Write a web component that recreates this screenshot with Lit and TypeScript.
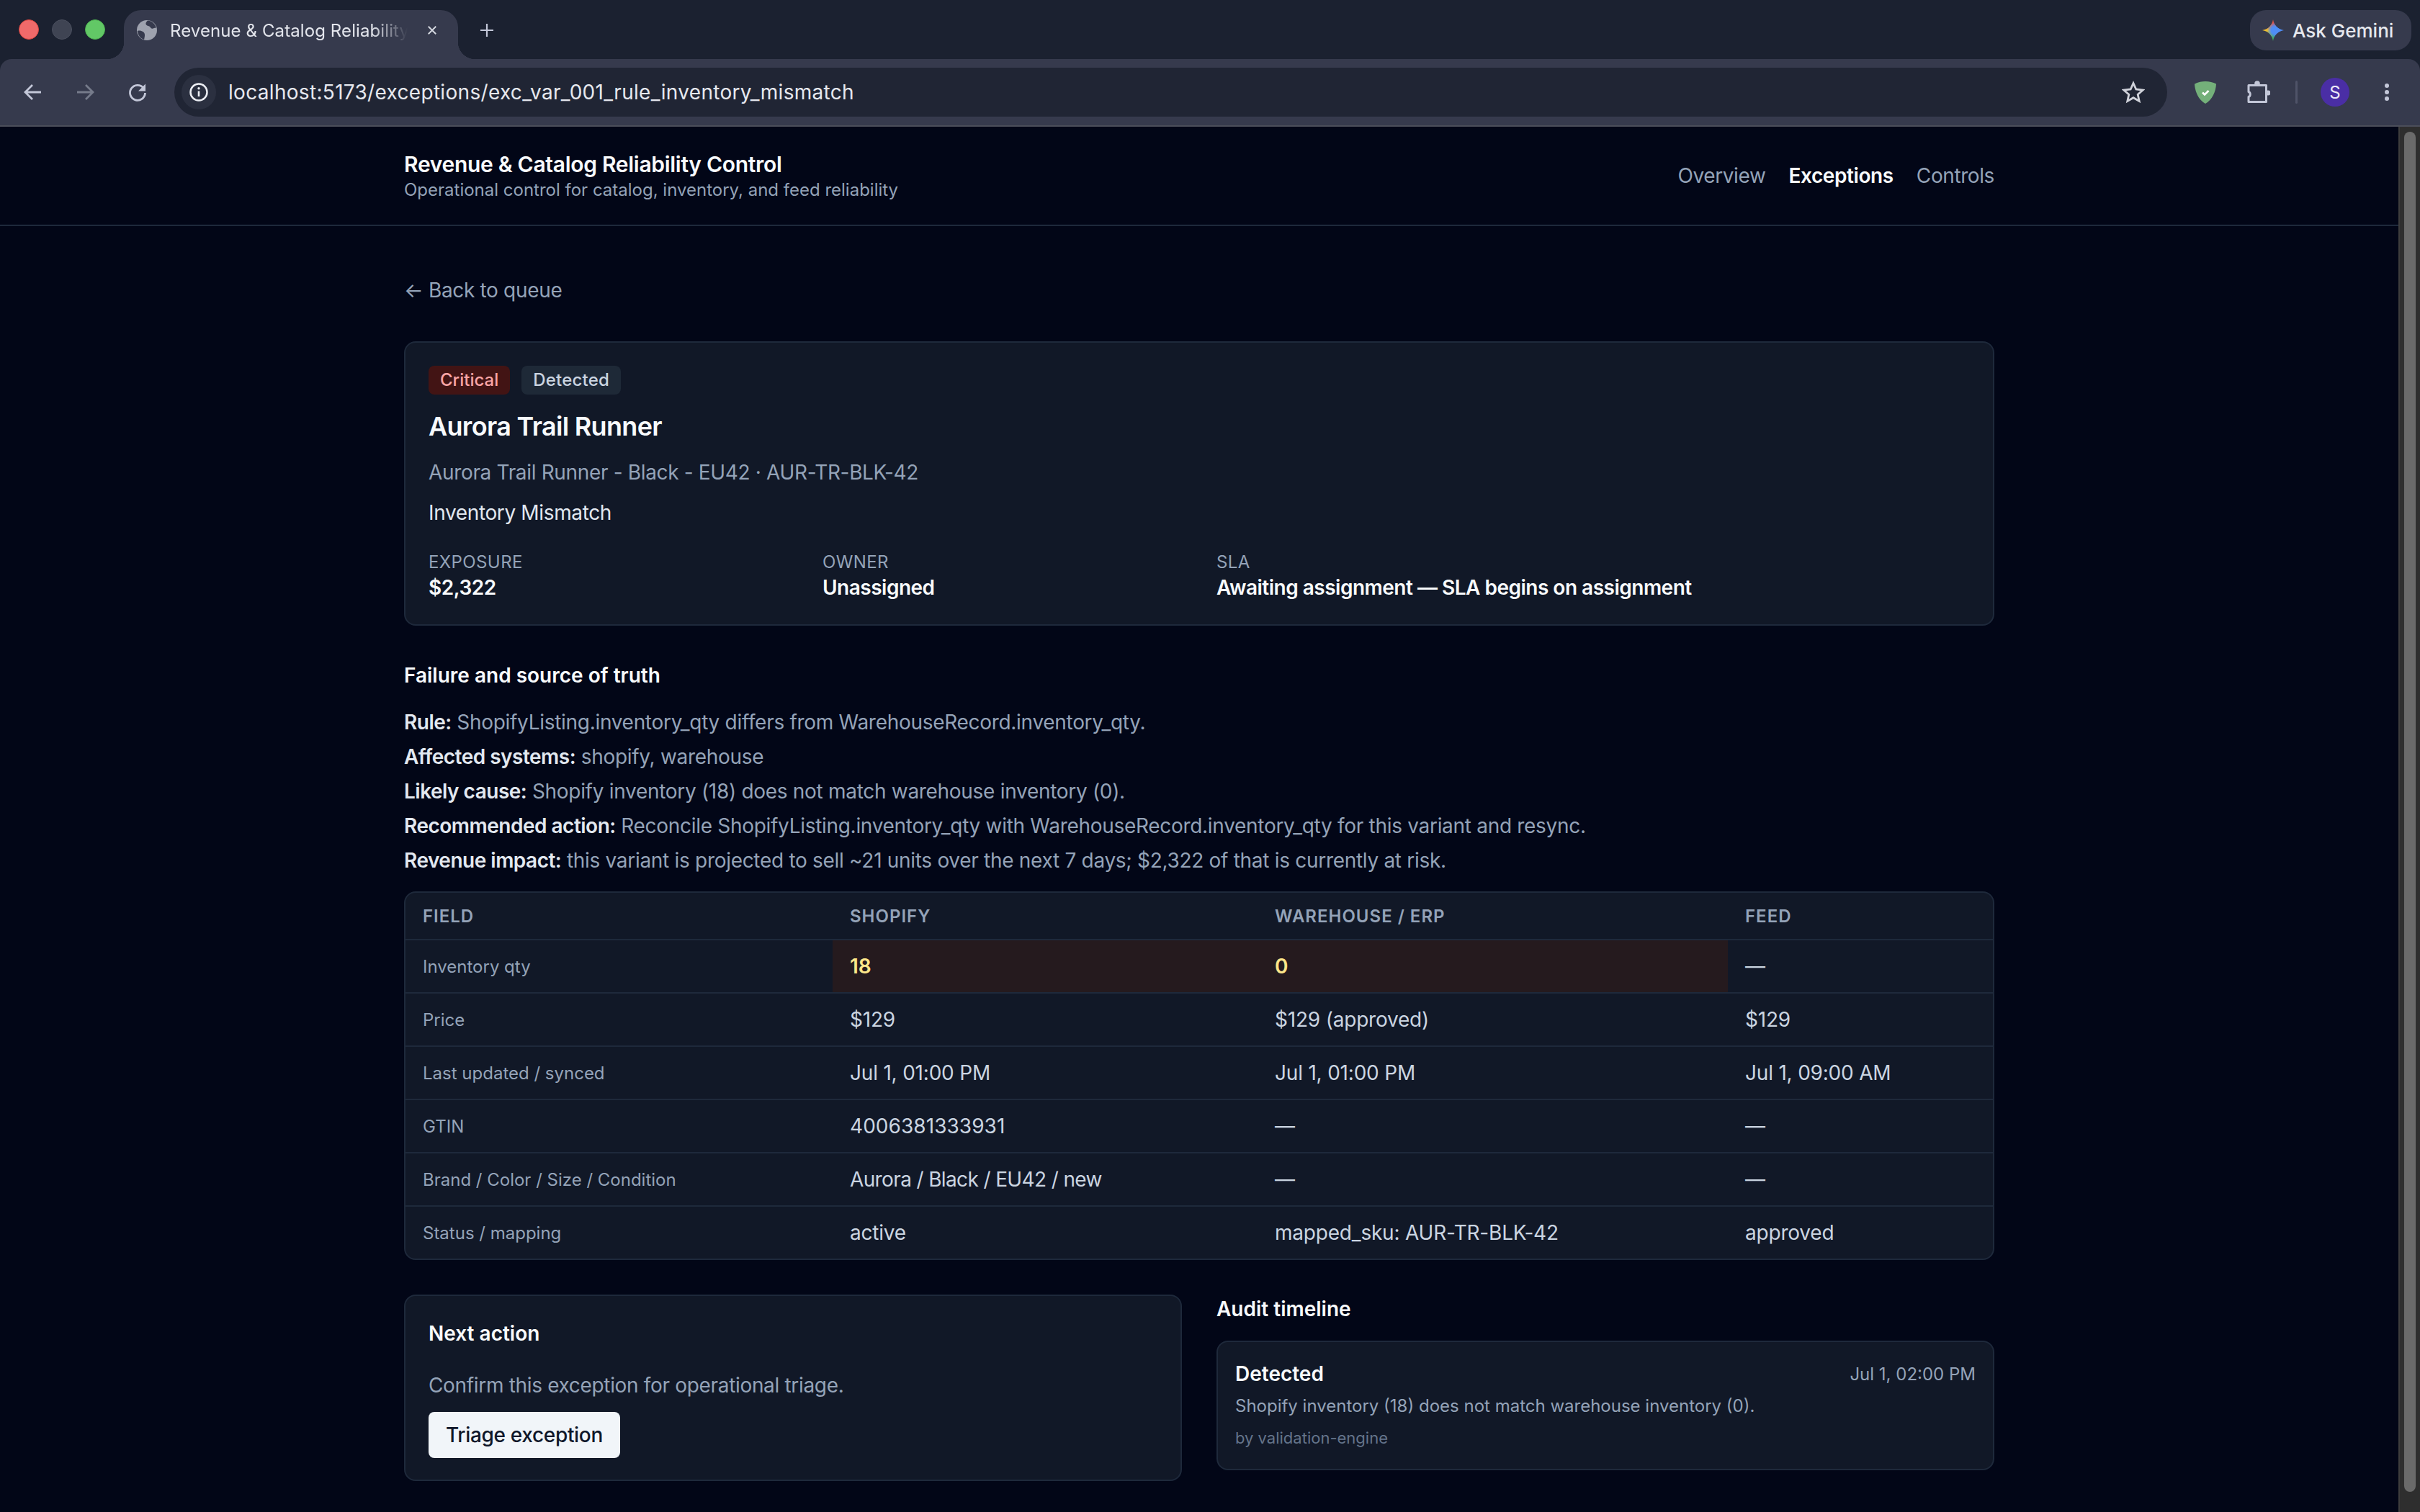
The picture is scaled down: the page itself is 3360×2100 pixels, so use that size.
import { css, html, LitElement } from "lit";
import { customElement } from "lit/decorators.js";

const ROWS = [
  { field: "Inventory qty", shopify: "18", warehouse: "0", feed: "—", mismatch: true },
  { field: "Price", shopify: "$129", warehouse: "$129 (approved)", feed: "$129" },
  { field: "Last updated / synced", shopify: "Jul 1, 01:00 PM", warehouse: "Jul 1, 01:00 PM", feed: "Jul 1, 09:00 AM" },
  { field: "GTIN", shopify: "4006381333931", warehouse: "—", feed: "—", digits: true },
  { field: "Brand / Color / Size / Condition", shopify: "Aurora / Black / EU42 / new", warehouse: "—", feed: "—", tight: true },
  { field: "Status / mapping", shopify: "active", warehouse: "mapped_sku: AUR-TR-BLK-42", feed: "approved" },
];

const FACTS = [
  ["Rule:", "ShopifyListing.inventory_qty differs from WarehouseRecord.inventory_qty."],
  ["Affected systems:", "shopify, warehouse"],
  ["Likely cause:", "Shopify inventory (18) does not match warehouse inventory (0)."],
  ["Recommended action:", "Reconcile ShopifyListing.inventory_qty with WarehouseRecord.inventory_qty for this variant and resync."],
  ["Revenue impact:", "this variant is projected to sell ~21 units over the next 7 days; $2,322 of that is currently at risk."],
];

@customElement("browser-chrome")
export class BrowserChrome extends LitElement {
  render() {
    return html`
      <div class="strip">
        <div class="lights">
          <span class="light red"></span>
          <span class="light grey"></span>
          <span class="light green"></span>
        </div>
        <div class="tab">
          <svg class="favicon" viewBox="0 0 28 28">
            <circle cx="14" cy="14" r="14" fill="#9ea2ae" />
            <path d="M15 .5c-2 2-3.500 4-2 6 1.500 2 4 1 5.500 3 .8 1.300 2 3 4 2 1.500-.7 3-1 4.500-1C25.500 5.500 21 1 15 .5z" fill="#363a4d" />
            <path d="M1 15c3-1 5.500 0 7.500 1 2 1 2.500 3 2.500 5 0 1.500-.5 4-1 6C5 25.500 1.500 21 1 15z" fill="#363a4d" />
          </svg>
          <span class="tab-title">Revenue &amp; Catalog Reliability Control</span>
          <svg class="tab-close" viewBox="0 0 16 16">
            <path d="M2 2l12 12M14 2L2 14" stroke="#d5d8e0" stroke-width="2.200" fill="none" />
          </svg>
        </div>
        <svg class="new-tab" viewBox="0 0 20 20">
          <path d="M10 1v18M1 10h18" stroke="#c3c7d8" stroke-width="2.200" fill="none" />
        </svg>
        <div class="gemini">
          <span class="spark"></span>
          <span>Ask Gemini</span>
        </div>
      </div>
      <div class="toolbar">
        <svg class="nav-icon" viewBox="0 0 28 28">
          <path d="M25 14H4M13 4L3 14l10 10" stroke="#c3c7d8" stroke-width="2.800" fill="none" />
        </svg>
        <svg class="nav-icon" viewBox="0 0 28 28">
          <path d="M3 14h21M15 4l10 10-10 10" stroke="#767b8b" stroke-width="2.800" fill="none" />
        </svg>
        <svg class="nav-icon" viewBox="0 0 28 28">
          <path d="M23 8a10.500 10.500 0 1 0 2.500 7" stroke="#c3c7d8" stroke-width="2.800" fill="none" />
          <path d="M26 2.500v10H16z" fill="#c3c7d8" />
        </svg>
        <div class="omnibox">
          <span class="site-info">
            <svg viewBox="0 0 26 26">
              <circle cx="13" cy="13" r="11.500" stroke="#eceef3" stroke-width="2.500" fill="none" />
              <path d="M13 11.500v7.500" stroke="#eceef3" stroke-width="2.600" />
              <circle cx="13" cy="7.800" r="1.700" fill="#eceef3" />
            </svg>
          </span>
          <span class="url">localhost:5173/exceptions/exc_var_001_rule_inventory_mismatch</span>
          <svg class="star" viewBox="0 0 32 32">
            <path d="M16 3.500l3.800 8.500 9.500 1-7.100 6.200 2 9.300-8.200-4.800-8.200 4.800 2-9.300L2.700 13l9.500-1z" stroke="#d0d2da" stroke-width="2.800" fill="none" />
          </svg>
        </div>
        <div class="extensions">
          <svg class="shield" viewBox="0 0 30 31">
            <path d="M15 0c5.500 0 10.500 1.200 15 3.500-.5 11-5.500 22-15 27.500C5.500 25.500.5 14.500 0 3.500 4.500 1.200 9.500 0 15 0z" fill="#74b07a" />
            <path d="M11 15.500l3 3 5.500-5.500" stroke="#ffffff" stroke-width="2.600" fill="none" />
          </svg>
          <svg class="puzzle" viewBox="0 0 32 32">
            <circle cx="14" cy="4" r="3.800" fill="#c3c7d8" />
            <circle cx="29" cy="17" r="3.500" fill="#c3c7d8" />
            <path d="M2 6.500h24.500V29.500H2V22.500c3-1 3-6 0-7z" stroke="#c3c7d8" stroke-width="3" fill="none" stroke-linejoin="round" />
          </svg>
          <span class="divider"></span>
          <span class="avatar">S</span>
          <svg class="kebab" viewBox="0 0 8 28">
            <circle cx="4" cy="5" r="3" fill="#c3c7d8" />
            <circle cx="4" cy="14" r="3" fill="#c3c7d8" />
            <circle cx="4" cy="23" r="3" fill="#c3c7d8" />
          </svg>
        </div>
      </div>
    `;
  }

  static styles = css`
    :host {
      display: block;
      font-family: Inter, "Liberation Sans", sans-serif;
      background: #1b2130;
    }

    .strip {
      height: 82px;
      display: flex;
      align-items: flex-start;
      box-sizing: border-box;
      padding-top: 14px;
    }

    .lights {
      display: flex;
      gap: 18px;
      margin-left: 26px;
      margin-top: 13px;
      width: 146px;
    }

    .light {
      width: 28px;
      height: 28px;
      box-sizing: border-box;
      border-radius: 50%;
      border: 1px solid transparent;
    }
    .red { background: #f06a6a; border-color: #d8453f; }
    .grey { background: #3f4453; border-color: #4a4f5e; }
    .green { background: #62c866; border-color: #4cae4f; }

    .tab {
      position: relative;
      width: 464px;
      height: 68px;
      box-sizing: border-box;
      padding: 0 0 12px 18px;
      background: #363a4d;
      border-radius: 24px 24px 0 0;
      display: flex;
      align-items: center;
    }

    .tab::before,
    .tab::after {
      content: "";
      position: absolute;
      bottom: 0;
      width: 24px;
      height: 24px;
    }
    .tab::before {
      left: -24px;
      background: radial-gradient(circle at 0 0, transparent 24px, #363a4d 24.500px);
    }
    .tab::after {
      right: -24px;
      background: radial-gradient(circle at 100% 0, transparent 24px, #363a4d 24.500px);
    }

    .favicon {
      width: 28px;
      height: 28px;
      flex: none;
    }

    .tab-title {
      margin-left: 18px;
      width: 330px;
      flex: none;
      overflow: hidden;
      white-space: nowrap;
      font-size: 24px;
      letter-spacing: 0.1px;
      color: #e3e5ec;
      -webkit-mask-image: linear-gradient(90deg, #000 85%, transparent 100%);
      mask-image: linear-gradient(90deg, #000 85%, transparent 100%);
    }

    .tab-close {
      width: 14px;
      height: 14px;
      margin-left: 27px;
      flex: none;
    }

    .new-tab {
      width: 20px;
      height: 20px;
      margin: 18px 0 0 30px;
    }

    .gemini {
      margin-left: auto;
      margin-right: 12px;
      width: 224px;
      height: 56px;
      box-sizing: border-box;
      padding-left: 17px;
      border-radius: 22px;
      background: #363a4d;
      display: flex;
      align-items: center;
      gap: 12px;
      font-size: 26px;
      font-weight: 500;
      color: #e6e8ee;
    }

    .spark {
      width: 30px;
      height: 30px;
      flex: none;
      background:
        radial-gradient(circle at 58% 50%, #4f8df5 22%, transparent 48%),
        conic-gradient(#e8503f 0deg, #4f8df5 60deg, #4f8df5 130deg, #3fae5f 180deg, #f5c02b 270deg, #e8503f 360deg);
      clip-path: path("M15 0C16.200 8 21.500 13.500 30 15 21.500 16.500 16.200 22 15 30 13.800 22 8.500 16.500 0 15 8.500 13.500 13.800 8 15 0z");
    }

    .toolbar {
      height: 92px;
      box-sizing: border-box;
      background: #363a4d;
      border-radius: 16px 16px 0 0;
      display: flex;
      align-items: center;
      padding-left: 32px;
      gap: 44px;
    }

    .nav-icon {
      width: 28px;
      height: 28px;
      flex: none;
    }

    .omnibox {
      width: 2767px;
      height: 68px;
      margin-left: -6px;
      flex: none;
      box-sizing: border-box;
      background: #202534;
      border-radius: 34px;
      display: flex;
      align-items: center;
      padding: 0 31px 0 10px;
    }

    .site-info {
      width: 48px;
      height: 48px;
      border-radius: 50%;
      background: #2b3040;
      display: flex;
      align-items: center;
      justify-content: center;
      flex: none;
    }
    .site-info svg {
      width: 26px;
      height: 26px;
    }

    .url {
      margin-left: 17px;
      font-size: 28px;
      letter-spacing: 0.31px;
      color: #e6e8ee;
      white-space: nowrap;
    }

    .star {
      margin-left: auto;
      width: 32px;
      height: 32px;
    }

    .extensions {
      display: flex;
      align-items: center;
      margin-left: -6px;
    }

    .shield {
      width: 30px;
      height: 31px;
    }

    .puzzle {
      width: 32px;
      height: 32px;
      margin-left: 43px;
    }

    .divider {
      width: 3px;
      height: 32px;
      border-radius: 2px;
      background: #4f5368;
      margin-left: 35px;
    }

    .avatar {
      width: 40px;
      height: 40px;
      margin-left: 32px;
      border-radius: 50%;
      background: #4a2ea5;
      color: #ece9f8;
      font-size: 24px;
      display: flex;
      align-items: center;
      justify-content: center;
    }

    .kebab {
      width: 8px;
      height: 28px;
      margin-left: 48px;
    }
  `;
}

@customElement("app-root")
export class AppRoot extends LitElement {
  render() {
    return html`
      <browser-chrome></browser-chrome>
      <div class="viewport">
        <div class="page">
          <header class="topbar">
            <div class="topbar-inner">
              <div class="brand-block">
                <div class="brand">Revenue &amp; Catalog Reliability Control</div>
                <div class="tagline">Operational control for catalog, inventory, and feed reliability</div>
              </div>
              <nav>
                <a>Overview</a>
                <a class="active">Exceptions</a>
                <a>Controls</a>
              </nav>
            </div>
          </header>
          <main>
            <a class="back">← Back to queue</a>
            <section class="card hero">
              <div class="chips">
                <span class="chip critical">Critical</span>
                <span class="chip">Detected</span>
              </div>
              <h1>Aurora Trail Runner</h1>
              <p class="variant">Aurora Trail Runner - Black - EU42 · AUR-TR-BLK-42</p>
              <p class="type">Inventory Mismatch</p>
              <div class="meta">
                <div>
                  <div class="meta-label">EXPOSURE</div>
                  <div class="meta-value">$2,322</div>
                </div>
                <div>
                  <div class="meta-label">OWNER</div>
                  <div class="meta-value">Unassigned</div>
                </div>
                <div class="wide">
                  <div class="meta-label">SLA</div>
                  <div class="meta-value">Awaiting assignment — SLA begins on assignment</div>
                </div>
              </div>
            </section>

            <h2 class="failure">Failure and source of truth</h2>
            <div class="facts">
              ${FACTS.map(([k, v]) => html`<div><strong>${k}</strong> ${v}</div>`)}
            </div>

            <div class="table-wrap">
              <table>
                <thead>
                  <tr>
                    <th>FIELD</th>
                    <th>SHOPIFY</th>
                    <th>WAREHOUSE / ERP</th>
                    <th>FEED</th>
                  </tr>
                </thead>
                <tbody>
                  ${ROWS.map(
                    (r) => html`
                      <tr>
                        <td class="field">${r.field}</td>
                        <td class="${r.mismatch ? "mismatch" : ""} ${r.tight ? "tight" : ""} ${r.digits ? "digits" : ""}">${r.shopify}</td>
                        <td class=${r.mismatch ? "mismatch" : ""}>${r.warehouse}</td>
                        <td>${r.feed}</td>
                      </tr>
                    `
                  )}
                </tbody>
              </table>
            </div>

            <div class="bottom">
              <section class="card next">
                <h2>Next action</h2>
                <p>Confirm this exception for operational triage.</p>
                <button>Triage exception</button>
              </section>
              <section>
                <h2 class="audit-title">Audit timeline</h2>
                <div class="card event">
                  <div class="event-head">
                    <span class="event-name">Detected</span>
                    <span class="event-time">Jul 1, 02:00 PM</span>
                  </div>
                  <div class="event-text">Shopify inventory (18) does not match warehouse inventory (0).</div>
                  <div class="event-by">by validation-engine</div>
                </div>
              </section>
            </div>
          </main>
        </div>
        <div class="scrollbar"><div class="thumb"></div></div>
      </div>
    `;
  }

  static styles = css`
    :host {
      display: block;
      height: 2100px;
      overflow: hidden;
      background: #020617;
      font-family: Inter, "Liberation Sans", sans-serif;
      color: #f1f5f9;
    }

    browser-chrome {
      border-bottom: 2px solid #4b4e5a;
    }

    .viewport {
      display: flex;
      height: 1924px;
    }

    .page {
      flex: 1;
      min-width: 0;
    }

    .scrollbar {
      width: 30px;
      flex: none;
      box-sizing: border-box;
      background: #2e2e2e;
      border-left: 2px solid #3c3c3c;
      padding: 7px 6px 0 6px;
    }

    .thumb {
      height: 1889px;
      border-radius: 8px;
      background: #6a6a6a;
    }

    .topbar {
      border-bottom: 2px solid #1e293b;
    }

    .topbar-inner {
      width: 2208px;
      height: 136px;
      margin: 0 auto;
      display: flex;
      align-items: center;
      justify-content: space-between;
    }

    .brand-block {
      padding-top: 4px;
    }

    .brand {
      font-size: 30px;
      font-weight: 600;
      line-height: 36px;
      letter-spacing: -0.3px;
      color: #f8fafc;
    }

    .tagline {
      font-size: 24px;
      line-height: 36px;
      color: #94a3b8;
    }

    nav {
      display: flex;
      gap: 32px;
      font-size: 28px;
      letter-spacing: -0.4px;
      color: #94a3b8;
    }

    nav .active {
      color: #f8fafc;
      font-weight: 600;
    }

    main {
      width: 2208px;
      margin: 0 auto;
      padding-top: 65px;
    }

    .back {
      display: block;
      font-size: 28px;
      line-height: 48px;
      letter-spacing: -0.33px;
      color: #94a3b8;
    }

    .card {
      box-sizing: border-box;
      background: #111827;
      border: 2px solid #1e293b;
      border-radius: 16px;
    }

    .hero {
      margin-top: 47px;
      padding: 32px;
      height: 395px;
    }

    .chips {
      display: flex;
      gap: 16px;
    }

    .chip {
      height: 40px;
      line-height: 40px;
      padding: 0 16px;
      border-radius: 8px;
      font-size: 24px;
      font-weight: 500;
      letter-spacing: 0.2px;
      background: #1e2937;
      color: #cbd5e1;
    }

    .chip.critical {
      letter-spacing: 0;
      background: #421414;
      color: #fca5a5;
    }

    h1 {
      margin: 16px 0 0;
      font-size: 36px;
      line-height: 56px;
      font-weight: 600;
      letter-spacing: -0.68px;
      color: #f8fafc;
    }

    .variant {
      margin: 12px 0 0;
      font-size: 28px;
      line-height: 48px;
      letter-spacing: -0.34px;
      color: #94a3b8;
    }

    .type {
      margin: 8px 0 0;
      font-size: 28px;
      line-height: 48px;
      letter-spacing: -0.36px;
      color: #e2e8f0;
    }

    .meta {
      margin-top: 28px;
      display: grid;
      grid-template-columns: repeat(4, 1fr);
      gap: 48px;
    }

    .wide {
      grid-column: span 2;
    }

    .meta-label {
      font-size: 24px;
      line-height: 33px;
      letter-spacing: 0.4px;
      color: #94a3b8;
    }

    .meta-value {
      font-size: 28px;
      line-height: 38px;
      font-weight: 600;
      letter-spacing: -0.5px;
      color: #f8fafc;
    }

    h2 {
      margin: 0;
      font-size: 28px;
      line-height: 48px;
      font-weight: 600;
      color: #f8fafc;
    }

    .failure {
      margin-top: 45px;
    }

    .facts {
      margin-top: 17px;
      font-size: 28px;
      line-height: 48px;
      letter-spacing: -0.3px;
      color: #94a3b8;
    }

    .facts strong {
      font-weight: 600;
      letter-spacing: -0.5px;
      color: #e2e8f0;
    }

    .table-wrap {
      margin-top: 19px;
      border: 2px solid #1e293b;
      border-radius: 16px;
      overflow: hidden;
      background: #111827;
    }

    table {
      width: 100%;
      table-layout: fixed;
      border-collapse: separate;
      border-spacing: 0;
    }

    th {
      box-sizing: border-box;
      height: 66px;
      padding: 0 24px;
      text-align: left;
      font-size: 24px;
      font-weight: 600;
      letter-spacing: 1px;
      color: #94a3b8;
      border-bottom: 2px solid #1e293b;
    }

    th:nth-child(1) { width: 593px; }
    th:nth-child(2) { width: 590px; }
    th:nth-child(3) { width: 653px; }

    td {
      box-sizing: border-box;
      height: 74px;
      padding: 0 24px;
      font-size: 28px;
      letter-spacing: -0.2px;
      color: #cbd5e1;
      border-bottom: 2px solid #1e293b;
    }

    tr:last-child td {
      border-bottom: 0;
      height: 72px;
    }

    td.field {
      font-size: 24px;
      letter-spacing: 0;
      color: #94a3b8;
    }

    td.tight {
      letter-spacing: -0.63px;
    }

    td.digits {
      letter-spacing: 0.05px;
    }

    td.mismatch {
      background: #251a1e;
      color: #fde68a;
      font-weight: 600;
    }

    .bottom {
      margin-top: 48px;
      display: grid;
      grid-template-columns: 1fr 1fr;
      gap: 48px;
      align-items: start;
    }

    .next {
      height: 259px;
      padding: 32px;
    }

    .next h2 {
      line-height: 40px;
    }

    .next p {
      margin: 28px 0 0;
      font-size: 28px;
      line-height: 48px;
      letter-spacing: -0.33px;
      color: #94a3b8;
    }

    button {
      display: block;
      margin-top: 13px;
      height: 64px;
      padding: 0 24px;
      border: 0;
      border-radius: 8px;
      background: #f1f5f9;
      color: #0f172a;
      font: 500 28px Inter, "Liberation Sans", sans-serif;
      letter-spacing: -0.33px;
    }

    .audit-title {
      line-height: 40px;
    }

    .event {
      margin-top: 24px;
      height: 180px;
      padding: 24px;
    }

    .event-head {
      display: flex;
      justify-content: space-between;
      align-items: center;
      height: 40px;
    }

    .event-name {
      font-size: 28px;
      font-weight: 600;
      color: #f8fafc;
    }

    .event-time {
      font-size: 24px;
      color: #94a3b8;
    }

    .event-text {
      margin-top: 3px;
      font-size: 24px;
      line-height: 44px;
      color: #94a3b8;
    }

    .event-by {
      margin-top: 2px;
      font-size: 22px;
      line-height: 40px;
      color: #64748b;
    }
  `;
}
